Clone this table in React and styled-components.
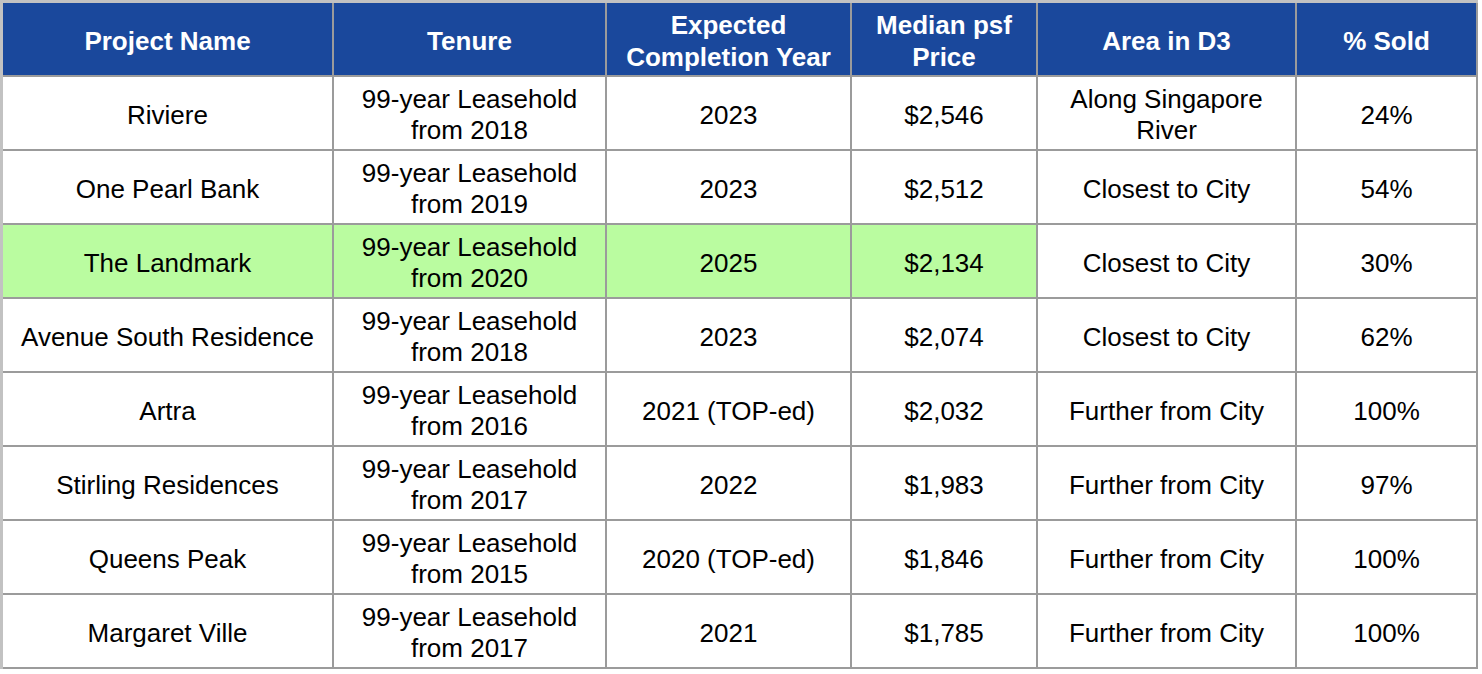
import styled, { createGlobalStyle } from "styled-components";

const GlobalStyle = createGlobalStyle`
    html, body {
        margin: 0;
        padding: 0;
        background: #ffffff;
    }
    * {
        box-sizing: border-box;
    }
`;

const COLUMNS = [
    { key: "name", title: "Project Name", width: 331 },
    { key: "tenure", title: "Tenure", width: 273 },
    { key: "year", title: "Expected\nCompletion Year", width: 245 },
    { key: "psf", title: "Median psf\nPrice", width: 186 },
    { key: "area", title: "Area in D3", width: 259 },
    { key: "sold", title: "% Sold", width: 181 },
];

const ROWS = [
    { name: "Riviere", tenure: "99-year Leasehold\nfrom 2018", year: "2023", psf: "$2,546", area: "Along Singapore\nRiver", sold: "24%" },
    { name: "One Pearl Bank", tenure: "99-year Leasehold\nfrom 2019", year: "2023", psf: "$2,512", area: "Closest to City", sold: "54%" },
    { name: "The Landmark", tenure: "99-year Leasehold\nfrom 2020", year: "2025", psf: "$2,134", area: "Closest to City", sold: "30%", highlight: ["name", "tenure", "year", "psf"] },
    { name: "Avenue South Residence", tenure: "99-year Leasehold\nfrom 2018", year: "2023", psf: "$2,074", area: "Closest to City", sold: "62%" },
    { name: "Artra", tenure: "99-year Leasehold\nfrom 2016", year: "2021 (TOP-ed)", psf: "$2,032", area: "Further from City", sold: "100%" },
    { name: "Stirling Residences", tenure: "99-year Leasehold\nfrom 2017", year: "2022", psf: "$1,983", area: "Further from City", sold: "97%" },
    { name: "Queens Peak", tenure: "99-year Leasehold\nfrom 2015", year: "2020 (TOP-ed)", psf: "$1,846", area: "Further from City", sold: "100%" },
    { name: "Margaret Ville", tenure: "99-year Leasehold\nfrom 2017", year: "2021", psf: "$1,785", area: "Further from City", sold: "100%" },
];

const Sheet = styled.div`
    display: grid;
    grid-template-columns: ${({ $widths }) => $widths.map((w) => `${w}px`).join(" ")};
    grid-auto-rows: 74px;
    width: max-content;
    border-left: 3px solid #c2c2c2;
    border-top: 3px solid #c2c2c2;
    font-family: "Liberation Sans", Arial, sans-serif;
    font-size: 26px;
    line-height: 31px;
`;

const Cell = styled.div`
    display: flex;
    align-items: center;
    justify-content: center;
    text-align: center;
    white-space: pre-line;
    padding: 4px 6px 0;
    border-right: 2px solid #9b9b9b;
    border-bottom: 2px solid #9b9b9b;
    color: #000000;
    background: ${({ $highlight }) => ($highlight ? "#bafca0" : "#ffffff")};
`;

const HeadCell = styled(Cell)`
    background: #1a489c;
    color: #ffffff;
    font-weight: 700;
    line-height: 32px;
`;

export default function App() {
    return (
        <>
            <GlobalStyle />
            <Sheet $widths={COLUMNS.map((c) => c.width)}>
                {COLUMNS.map((col) => (
                    <HeadCell key={col.key}>{col.title}</HeadCell>
                ))}
                {ROWS.map((row) =>
                    COLUMNS.map((col) => (
                        <Cell
                            key={`${row.name}-${col.key}`}
                            $highlight={row.highlight?.includes(col.key)}
                        >
                            {row[col.key]}
                        </Cell>
                    ))
                )}
            </Sheet>
        </>
    );
}
